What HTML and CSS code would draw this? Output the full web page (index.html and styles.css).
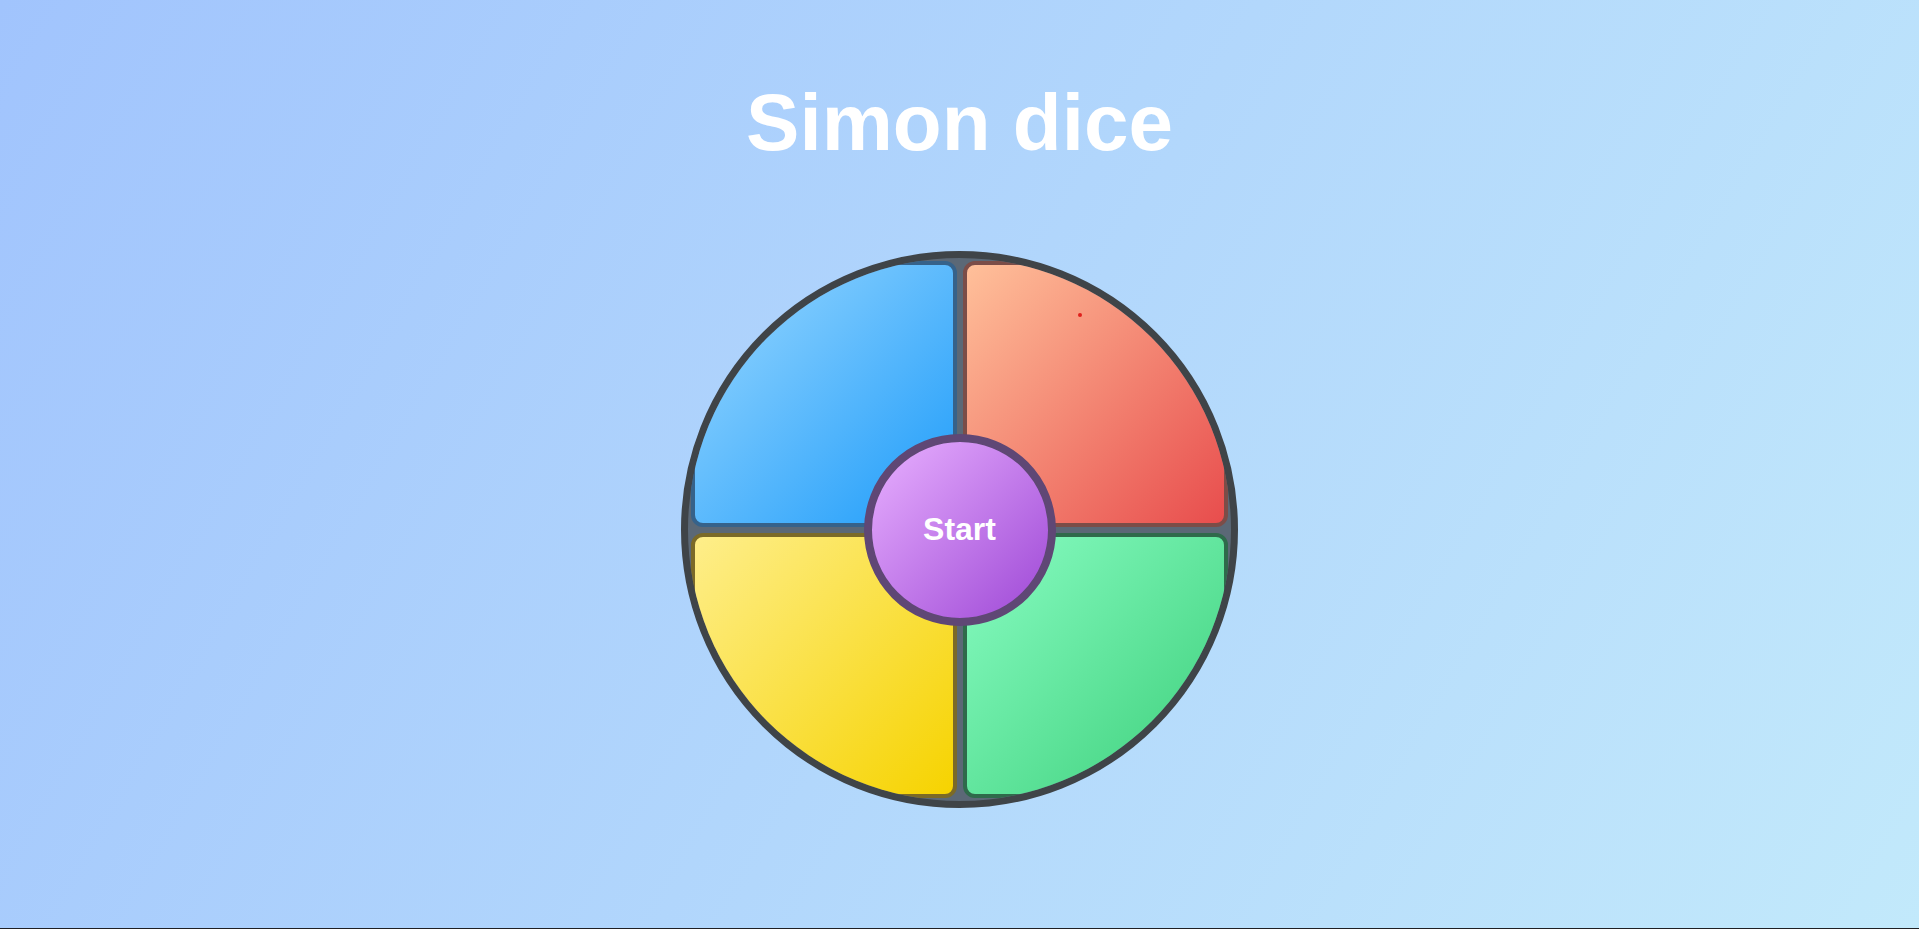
FILE: index.html
```html
<!DOCTYPE html>
<html lang="es">
<head>
<meta charset="utf-8">
<title>Simon dice</title>
<link rel="stylesheet" href="styles.css">
</head>
<body>
  <main class="page">
    <h1 class="title">Simon dice</h1>
    <div class="board">
      <div class="pad pad-blue"></div>
      <div class="pad pad-red"></div>
      <div class="pad pad-yellow"></div>
      <div class="pad pad-green"></div>
      <button class="start">Start</button>
      <span class="dot"></span>
    </div>
  </main>
</body>
</html>
```

FILE: styles.css
```css
html {
  margin: 0;
  background: #1f2024;
}

body {
  margin: 0;
  height: 928px;
  background: linear-gradient(120deg, #a1c4fd 0%, #c2e9fb 100%);
  font-family: "Liberation Sans", Arial, sans-serif;
  overflow: hidden;
}

.page {
  display: flex;
  flex-direction: column;
  align-items: center;
}

.title {
  margin: 83px 0 0;
  font-size: 80px;
  line-height: 80px;
  font-weight: 700;
  color: #ffffff;
}

.board {
  position: relative;
  margin-top: 88px;
  width: 557px;
  height: 557px;
  box-sizing: border-box;
  border: 7px solid #3f4448;
  border-radius: 50%;
  background: #5b6876;
  overflow: hidden;
  padding: 3px;
  display: grid;
  grid-template-columns: 1fr 1fr;
  grid-template-rows: 1fr 1fr;
  gap: 6px;
}

.pad {
  box-sizing: border-box;
  border: 4px solid transparent;
  border-radius: 12px;
}

.pad-blue {
  border-color: #36628a;
  background: linear-gradient(135deg, #9ad8ff 0%, #1e9cfa 100%);
}

.pad-red {
  border-color: #7b4d48;
  background: linear-gradient(135deg, #ffc09a 0%, #e84d4d 100%);
}

.pad-yellow {
  border-color: #7b6a28;
  background: linear-gradient(135deg, #feee8a 0%, #f6d300 100%);
}

.pad-green {
  border-color: #2f6a4b;
  background: linear-gradient(135deg, #88fcc2 0%, #3ccf7a 100%);
}

.start {
  position: absolute;
  left: 50%;
  top: 50%;
  width: 192px;
  height: 192px;
  margin: -96px 0 0 -96px;
  box-sizing: border-box;
  border: 8px solid #5f4775;
  border-radius: 50%;
  background: linear-gradient(135deg, #e8b0ff 0%, #9e48d6 100%);
  color: #ffffff;
  font-family: "Liberation Sans", Arial, sans-serif;
  font-size: 32px;
  font-weight: 700;
  padding: 0;
  cursor: pointer;
}

.dot {
  position: absolute;
  left: 390px;
  top: 55px;
  width: 4px;
  height: 4px;
  border-radius: 50%;
  background: #e0201c;
}
```
